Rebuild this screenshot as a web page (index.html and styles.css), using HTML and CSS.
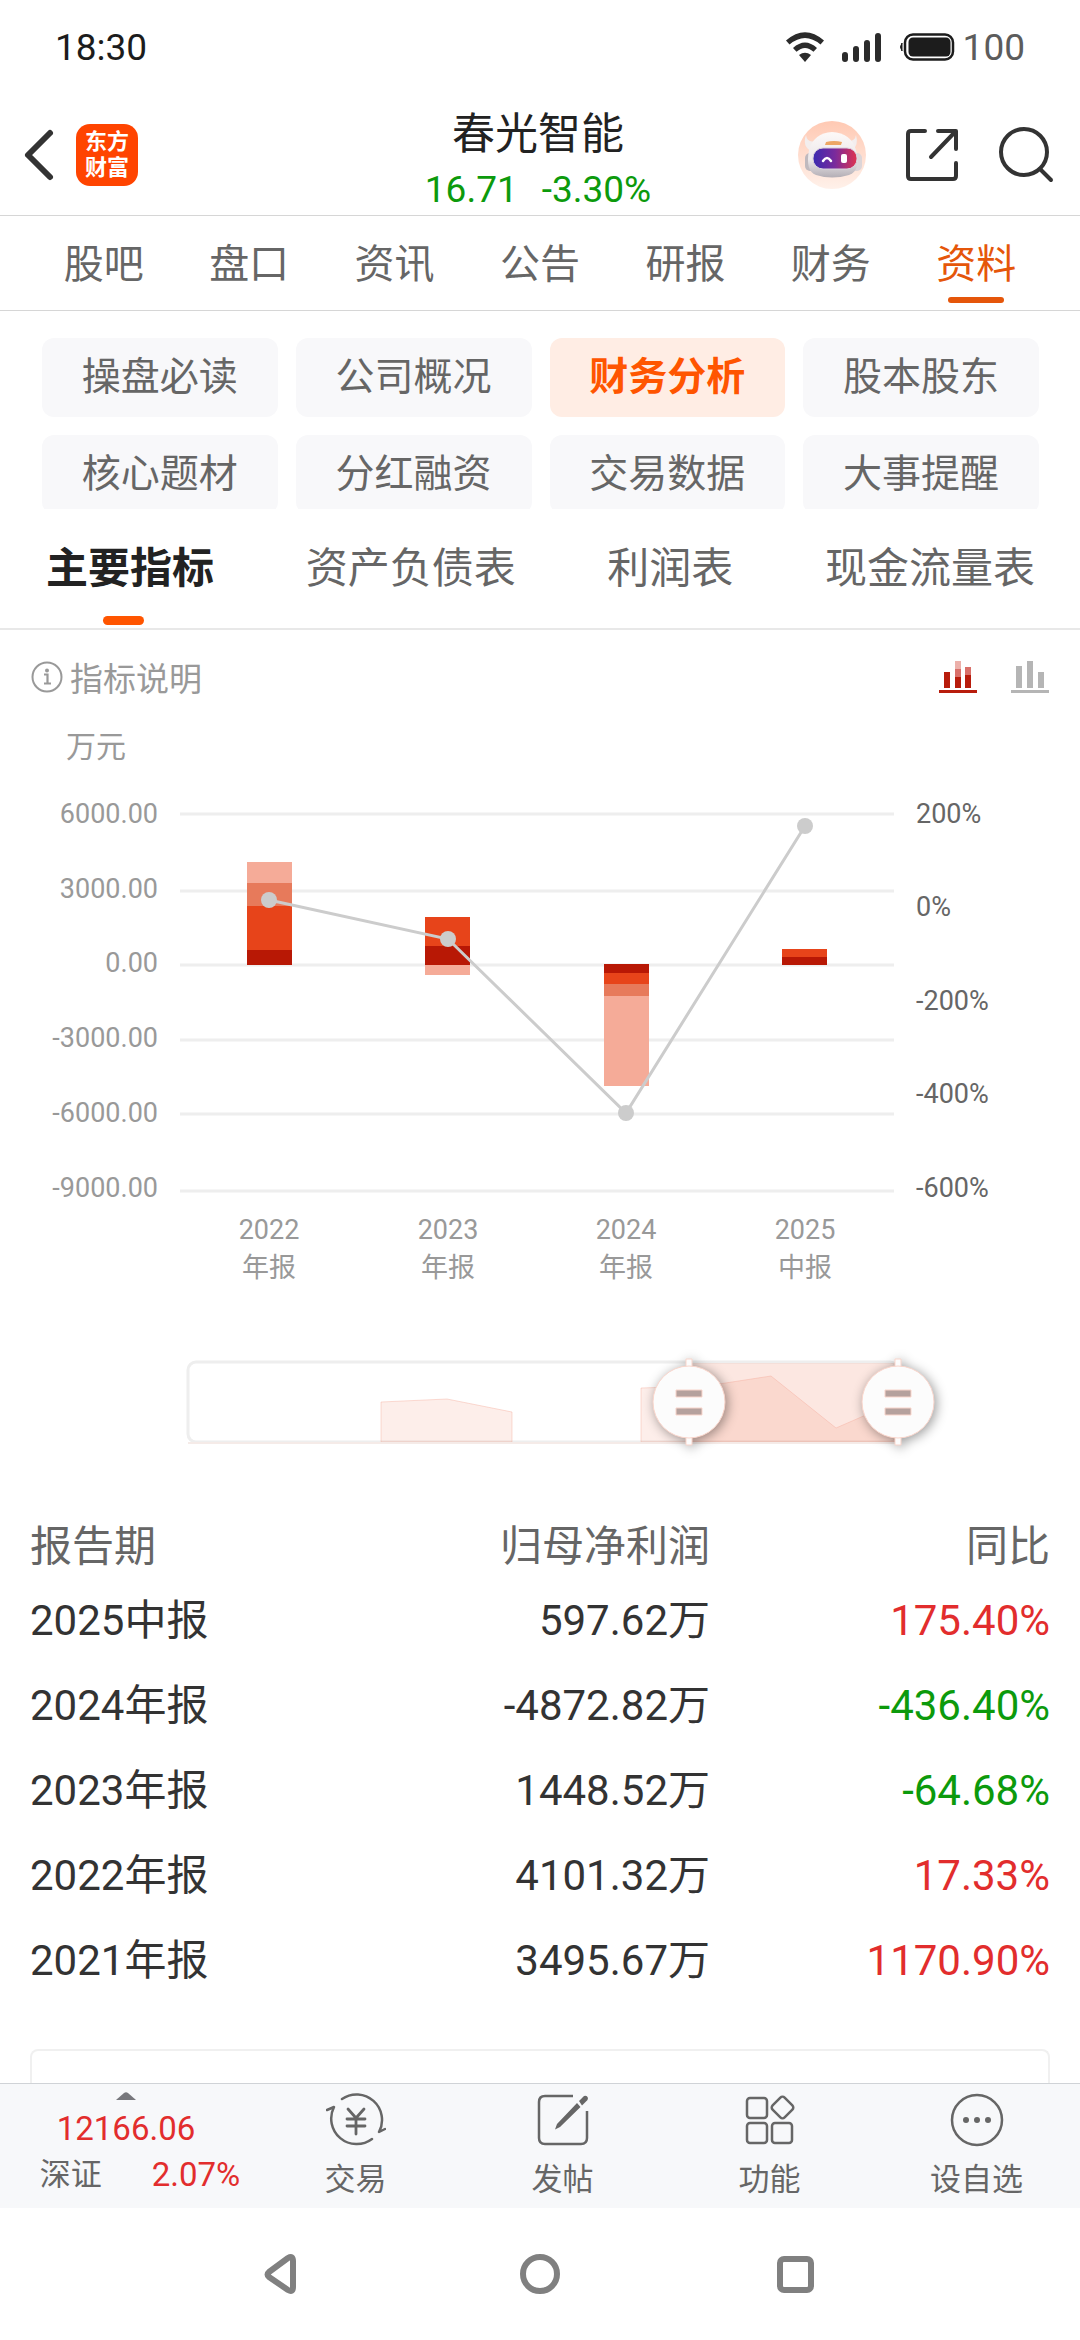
FILE: index.html
```html
<!DOCTYPE html>
<html lang="zh-CN">
<head>
<meta charset="utf-8">
<meta name="viewport" content="width=device-width, initial-scale=1">
<title>春光智能 - 财务分析</title>
<link rel="stylesheet" href="styles.css">
</head>
<body>
<div class="screen">
  <div class="status">
    <span class="status-time">18:30</span>
    <div class="status-icons">
      <svg width="40" height="32" viewBox="0 0 40 32" fill="#2b2b2b" aria-hidden="true">
        <path d="M1 9.500Q20-7 39 9.500L35.500 13.500Q20 .5 4.500 13.500Z"/>
        <path d="M8 17Q20 6 32 17L28.500 20.800Q20 13 11.500 20.800Z"/>
        <path d="M14 24Q20 19.500 26 24L20 31Z"/>
      </svg>
      <svg width="42" height="32" viewBox="0 0 42 32" stroke="#2b2b2b" stroke-width="6" stroke-linecap="round" aria-hidden="true">
        <path d="M4 24v4M15 18v10M26 12v16M37 5v23"/>
      </svg>
      <svg width="56" height="32" viewBox="0 0 56 32" aria-hidden="true">
        <path d="M3 12Q0 16 3 20Z" fill="#1c1c1c" stroke="#1c1c1c"/>
        <rect x="6" y="3.500" width="48" height="25" rx="8" fill="none" stroke="#1c1c1c" stroke-width="2.500"/>
        <rect x="9.500" y="6.500" width="42" height="19" rx="4.500" fill="#1c1c1c"/>
      </svg>
      <span class="status-level">100</span>
    </div>
  </div>

  <header class="header">
    <div class="header-side">
      <button class="icon-btn" aria-label="返回">
        <svg width="34" height="54" viewBox="0 0 34 54" fill="none" stroke="#333" stroke-width="6" stroke-linecap="round" stroke-linejoin="round"><path d="M28 5L6 27l22 22"/></svg>
      </button>
      <a class="logo" href="#">东方<br>财富</a>
    </div>
    <div class="header-title">
      <h1 class="stock-name">春光智能</h1>
      <div class="stock-price"><span>16.71</span><span>-3.30%</span></div>
    </div>
    <div class="header-side header-actions">
      <button class="icon-btn" aria-label="智能助手">
        <svg width="68" height="68" viewBox="0 0 68 68">
          <defs>
            <linearGradient id="halo" x1="0" y1="0" x2="0" y2="1"><stop offset="0" stop-color="#ffc9b3"/><stop offset="1" stop-color="#fff1ea"/></linearGradient>
            <linearGradient id="shell" x1="0" y1="0" x2="0" y2="1"><stop offset="0" stop-color="#fdf9f8"/><stop offset=".6" stop-color="#ece8ea"/><stop offset="1" stop-color="#b3aeb5"/></linearGradient>
            <linearGradient id="visor" x1="0" y1="0" x2="1" y2="0"><stop offset="0" stop-color="#3a2bb0"/><stop offset=".5" stop-color="#7a2a9c"/><stop offset="1" stop-color="#e0334f"/></linearGradient>
          </defs>
          <circle cx="34" cy="34" r="34" fill="url(#halo)"/>
          <path d="M8 14Q9 22 17 20L13 30Q4 25 8 14ZM58 14Q61 25 54 29L49 20Q57 21 58 14Z" fill="#f3eeee"/>
          <rect x="7" y="32" width="12" height="18" rx="5" fill="#bfb9be"/>
          <rect x="53" y="32" width="11" height="18" rx="5" fill="#dcd5d8"/>
          <path d="M34 11Q53 12 58 29Q63 50 51 54Q34 59 18 54Q7 50 11 29Q16 12 34 11Z" fill="url(#shell)"/>
          <path d="M28 21Q36 19 44 21L43 24H27Z" fill="#eda764"/>
          <rect x="15" y="27" width="44" height="21" rx="10" fill="url(#visor)" stroke="#d8d0dc"/>
          <path d="M25 40Q29 34 33 40" fill="none" stroke="#fff" stroke-width="2.500" stroke-linecap="round"/>
          <rect x="43" y="33" width="6" height="9" rx="2" fill="#fff"/>
        </svg>
      </button>
      <button class="icon-btn" aria-label="分享">
        <svg width="56" height="56" viewBox="0 0 56 56" fill="none" stroke="#333" stroke-width="4" stroke-linecap="round" stroke-linejoin="round"><path d="M21 4H7Q4 4 4 7V49Q4 52 7 52H49Q52 52 52 49V36M34 4H52V22M51 5L27 30"/></svg>
      </button>
      <button class="icon-btn" aria-label="搜索">
        <svg width="56" height="56" viewBox="0 0 56 56" fill="none" stroke="#333" stroke-width="4" stroke-linecap="round"><circle cx="26" cy="25" r="23"/><path d="M42 42L53 53"/></svg>
      </button>
    </div>
  </header>

  <nav class="tabs">
    <a class="tab" href="#">股吧</a>
    <a class="tab" href="#">盘口</a>
    <a class="tab" href="#">资讯</a>
    <a class="tab" href="#">公告</a>
    <a class="tab" href="#">研报</a>
    <a class="tab" href="#">财务</a>
    <a class="tab tab-active" href="#">资料</a>
  </nav>

  <main class="content">
    <div class="chips">
      <button class="chip">操盘必读</button>
      <button class="chip">公司概况</button>
      <button class="chip chip-active">财务分析</button>
      <button class="chip">股本股东</button>
      <button class="chip">核心题材</button>
      <button class="chip">分红融资</button>
      <button class="chip">交易数据</button>
      <button class="chip">大事提醒</button>
    </div>

    <nav class="subtabs">
      <a class="subtab subtab-active" href="#">主要指标</a>
      <a class="subtab" href="#">资产负债表</a>
      <a class="subtab" href="#">利润表</a>
      <a class="subtab" href="#">现金流量表</a>
    </nav>

    <div class="toolbar">
      <button class="hint">
        <svg width="32" height="32" viewBox="0 0 32 32" fill="none" stroke="#999" stroke-width="2"><circle cx="16" cy="16" r="14.500"/><path d="M13 13.500H16.500V22M13 22.500H20" stroke-width="2.200"/><circle cx="16" cy="9.500" r="2" fill="#999" stroke="none"/></svg>
        指标说明
      </button>
      <div class="toggles">
        <button class="icon-btn" aria-label="堆叠图">
          <svg width="38" height="34" viewBox="0 0 38 34"><path fill="#b81c0c" d="M5 12h6v16H5zM16 17h6v11h-6zM26 15h6v13h-6zM0 30h38v3H0z"/><path fill="#d9706a" d="M16 9h6v8h-6zM26 7h6v8h-6z"/><path fill="#ecb0aa" d="M16 1h6v8h-6z"/></svg>
        </button>
        <button class="icon-btn" aria-label="柱状图">
          <svg width="38" height="34" viewBox="0 0 38 34"><path fill="#b5b5b5" d="M5 6h6v22H5zM16 1h6v27h-6zM27 12h6v16h-6zM0 30h38v3H0z"/></svg>
        </button>
      </div>
    </div>

    <svg class="chart" viewBox="0 720 1080 760" role="img" aria-label="归母净利润与同比">
      <text class="unit" x="66" y="757">万元</text>
      <path class="grid" d="M180 814H894M180 891H894M180 965H894M180 1040H894M180 1114H894M180 1191H894"/>
      <g class="axis axis-left">
        <text x="158" y="823">6000.00</text>
        <text x="158" y="898">3000.00</text>
        <text x="158" y="972">0.00</text>
        <text x="158" y="1047">-3000.00</text>
        <text x="158" y="1122">-6000.00</text>
        <text x="158" y="1197">-9000.00</text>
      </g>
      <g class="axis axis-right">
        <text x="916" y="823">200%</text>
        <text x="916" y="916">0%</text>
        <text x="916" y="1010">-200%</text>
        <text x="916" y="1103">-400%</text>
        <text x="916" y="1197">-600%</text>
      </g>
      <g class="axis axis-bottom">
        <text x="269" y="1239">2022</text><text x="269" y="1277">年报</text>
        <text x="448" y="1239">2023</text><text x="448" y="1277">年报</text>
        <text x="626" y="1239">2024</text><text x="626" y="1277">年报</text>
        <text x="805" y="1239">2025</text><text x="805" y="1277">中报</text>
      </g>
      <path class="q1" d="M247 950h45v15h-45zM425 946h45v19h-45zM604 964h45v9h-45zM782 957h45v8h-45z"/>
      <path class="q2" d="M247 906h45v44h-45zM425 917h45v29h-45zM604 973h45v11h-45zM782 949h45v8h-45z"/>
      <path class="q3" d="M247 883h45v23h-45zM604 984h45v12h-45z"/>
      <path class="q4" d="M247 862h45v21h-45zM425 965h45v10h-45zM604 996h45v90h-45z"/>
      <path class="trend" d="M269 900L448 939L626 1113L805 826"/>
      <g class="dots"><circle cx="269" cy="900" r="8"/><circle cx="448" cy="939" r="8"/><circle cx="626" cy="1113" r="8"/><circle cx="805" cy="826" r="8"/></g>

      <rect class="range-box" x="188" y="1362" width="710" height="80" rx="8"/>
      <rect class="range-selected" x="689" y="1363" width="209" height="79"/>
      <path class="range-area" d="M381 1442V1402L447 1399L512 1412V1442ZM641 1442V1388L706 1386L771 1376L836 1428L898 1401V1442Z"/>
      <path class="range-base" d="M188 1443H898"/>
      <g class="handle"><path class="handle-stem" d="M686 1359h6v86h-6z"/><circle cx="689" cy="1402" r="36"/><path class="handle-grip" d="M676 1390h26v7h-26zM676 1408h26v7h-26z"/></g>
      <g class="handle"><path class="handle-stem" d="M895 1359h6v86h-6z"/><circle cx="898" cy="1402" r="36"/><path class="handle-grip" d="M885 1390h26v7h-26zM885 1408h26v7h-26z"/></g>
    </svg>

    <table class="report">
      <thead><tr><th>报告期</th><th>归母净利润</th><th>同比</th></tr></thead>
      <tbody>
        <tr><td>2025中报</td><td>597.62万</td><td class="up">175.40%</td></tr>
        <tr><td>2024年报</td><td>-4872.82万</td><td class="down">-436.40%</td></tr>
        <tr><td>2023年报</td><td>1448.52万</td><td class="down">-64.68%</td></tr>
        <tr><td>2022年报</td><td>4101.32万</td><td class="up">17.33%</td></tr>
        <tr><td>2021年报</td><td>3495.67万</td><td class="up">1170.90%</td></tr>
      </tbody>
    </table>
    <div class="next-card"></div>
  </main>

  <footer class="dock">
    <button class="index">
      <svg width="20" height="8" viewBox="0 0 20 8"><path d="M0 8L8 1Q10-.5 12 1L20 8Z" fill="#77777c"/></svg>
      <span class="index-value">12166.06</span>
      <span class="index-row"><span>深证</span><span class="index-change">2.07%</span></span>
    </button>
    <button class="dock-item">
      <svg width="60" height="56" viewBox="0 0 60 56" fill="none" stroke="#666" stroke-width="2.500" stroke-linecap="round" stroke-linejoin="round"><path d="M16 7A25.500 25.500 0 0 1 53 40L59 37M46 47A25.500 25.500 0 0 1 8 15L1 18"/><path d="M22 17L30 26L38 17M30 26V42M21 27H39M21 34H39" stroke-width="2.800"/></svg>
      交易
    </button>
    <button class="dock-item">
      <svg width="56" height="56" viewBox="0 0 56 56" fill="none" stroke="#666" stroke-width="2.500"><path d="M38 4H10Q4 4 4 10V46Q4 52 10 52H46Q52 52 52 46V19"/><path fill="#666" stroke="none" d="M42 11L45.500 15L25 35L20 37.500L22 32ZM44 9L49 4Q52 3 53 6Q53 8 51 9.500L47 13.500Z"/></svg>
      发帖
    </button>
    <button class="dock-item">
      <svg width="56" height="56" viewBox="0 0 56 56" fill="none" stroke="#666" stroke-width="2.500"><rect x="5" y="6" width="20" height="20" rx="3"/><rect x="5" y="31" width="20" height="20" rx="3"/><rect x="30" y="31" width="20" height="20" rx="3"/><rect x="32" y="7" width="17" height="17" rx="3" transform="rotate(45 40.500 15.500)"/></svg>
      功能
    </button>
    <button class="dock-item">
      <svg width="56" height="56" viewBox="0 0 56 56"><circle cx="28" cy="28" r="25" fill="none" stroke="#666" stroke-width="2.500"/><g fill="#666"><circle cx="17" cy="28" r="3"/><circle cx="28" cy="28" r="3"/><circle cx="39" cy="28" r="3"/></g></svg>
      设自选
    </button>
  </footer>

  <div class="sysnav">
    <button class="icon-btn" aria-label="返回"><svg width="48" height="48" viewBox="2 0 48 48" fill="none" stroke="#808080" stroke-width="6" stroke-linejoin="round"><path d="M10 22L29 8Q34 5 34 11V37Q34 43 29 40L10 27Q7 24.500 10 22Z"/></svg></button>
    <button class="icon-btn" aria-label="主屏幕"><svg width="48" height="48" viewBox="0 0 48 48" fill="none" stroke="#808080" stroke-width="6"><circle cx="24" cy="24" r="17"/></svg></button>
    <button class="icon-btn" aria-label="最近任务"><svg width="48" height="48" viewBox="0 0 48 48" fill="none" stroke="#808080" stroke-width="6"><rect x="9" y="9" width="31" height="31" rx="4"/></svg></button>
  </div>
</div>
</body>
</html>
```

FILE: styles.css
```css
* {
  box-sizing: border-box;
}

body {
  margin: 0;
  background: #fff;
  color: #333;
  font-family: Roboto, "Noto Sans CJK SC", sans-serif;
}

button {
  margin: 0;
  padding: 0;
  border: 0;
  background: none;
  color: inherit;
  font: inherit;
}

a {
  color: inherit;
  text-decoration: none;
}

svg {
  display: block;
  flex: none;
}

.screen {
  display: flex;
  flex-direction: column;
  min-height: 100vh;
}

.icon-btn {
  display: flex;
}

/* status bar */
.status {
  display: flex;
  justify-content: space-between;
  align-items: center;
  height: 94px;
  padding: 0 55px;
  font-size: 37px;
}

.status-time {
  color: #1c1c1c;
}

.status-icons {
  display: flex;
  align-items: center;
  gap: 16px;
}

.status-level {
  margin-left: -8px;
  color: #5c5c5c;
}

/* header */
.header {
  display: grid;
  grid-template-columns: 1fr auto 1fr;
  align-items: center;
  height: 122px;
  padding: 0 26px 0 22px;
  border-bottom: 1px solid #d6d6d6;
}

.header-side {
  display: flex;
  align-items: center;
  gap: 20px;
}

.header-actions {
  justify-content: flex-end;
  gap: 38px;
}

.logo {
  display: flex;
  align-items: center;
  justify-content: center;
  width: 62px;
  height: 62px;
  border-radius: 14px;
  background: #ff4400;
  color: #fff;
  font-size: 22px;
  font-weight: 700;
  line-height: 26px;
}

.header-title {
  display: flex;
  flex-direction: column;
  align-items: center;
  padding-top: 4px;
}

.stock-name {
  margin: 0;
  color: #222;
  font-size: 43px;
  font-weight: 400;
  line-height: 66px;
}

.stock-price {
  display: flex;
  gap: 24px;
  color: #0c9a0c;
  font-size: 37px;
  line-height: 46px;
}

/* main tabs */
.tabs {
  display: flex;
  height: 95px;
  padding: 0 31px;
  border-bottom: 1px solid #d6d6d6;
  color: #666;
  font-size: 40px;
  line-height: 97px;
}

.tab {
  position: relative;
  flex: 1;
  text-align: center;
}

.tab-active {
  color: #e5560a;
}

.tab-active::after {
  content: "";
  position: absolute;
  bottom: 7px;
  left: 50%;
  width: 56px;
  height: 6px;
  margin-left: -28px;
  border-radius: 3px;
  background: #e5560a;
}

.content {
  flex: 1;
}

.chips {
  display: grid;
  grid-template-columns: repeat(4, 1fr);
  grid-auto-rows: 79px;
  gap: 18px;
  height: 198px;
  padding: 27px 41px 0 42px;
  overflow: hidden;
}

.chip {
  padding-bottom: 9px;
  border-radius: 12px;
  background: #f8f8fa;
  color: #666;
  font-size: 39px;
}

.chip-active {
  background: #ffede4;
  color: #ff5500;
  font-weight: 700;
}

/* report tabs */
.subtabs {
  display: flex;
  justify-content: space-between;
  height: 121px;
  padding: 0 45px 0 46px;
  border-bottom: 2px solid #e8e8e8;
  color: #666;
  font-size: 42px;
  line-height: 120px;
}

.subtab {
  position: relative;
}

.subtab-active {
  color: #222;
  font-weight: 700;
}

.subtab-active::after {
  content: "";
  position: absolute;
  bottom: 3px;
  left: 57px;
  width: 41px;
  height: 9px;
  border-radius: 5px;
  background: #ff5500;
}

.toolbar {
  display: flex;
  align-items: center;
  justify-content: space-between;
  height: 90px;
  padding: 4px 31px 0;
}

.hint {
  display: flex;
  align-items: center;
  gap: 7px;
  color: #999;
  font-size: 33px;
}

.toggles {
  display: flex;
  gap: 34px;
}

/* chart */
.chart {
  width: 100%;
  height: auto;
}

.unit {
  fill: #999;
  font-size: 30px;
}

.grid {
  fill: none;
  stroke: #eee;
  stroke-width: 3;
}

.axis {
  fill: #999;
  font-size: 27px;
}

.axis-left {
  text-anchor: end;
}

.axis-right {
  fill: #666;
}

.axis-bottom {
  text-anchor: middle;
}

.q1 {
  fill: #b81805;
}

.q2 {
  fill: #e7441a;
}

.q3 {
  fill: #e77a5b;
}

.q4 {
  fill: #f5ab98;
}

.trend {
  fill: none;
  stroke: #ccc;
  stroke-width: 3;
}

.dots {
  fill: #ccc;
}

.range-box {
  fill: none;
  stroke: #eee;
  stroke-width: 3;
}

.range-selected {
  fill: #e7441a;
  fill-opacity: 0.13;
}

.range-area {
  fill: #e7441a;
  fill-opacity: 0.09;
  stroke: #f5ab98;
  stroke-opacity: 0.4;
}

.range-base {
  stroke: #f5ebe8;
  stroke-width: 2;
}

.handle {
  fill: #fcfcfc;
  stroke: #f9d5cb;
  filter: drop-shadow(2px 2px 6px rgba(0, 0, 0, 0.4));
}

.handle-grip {
  fill: #b5a19d;
}

/* report table */
.report {
  width: 100%;
  padding: 0 30px;
  border-spacing: 0;
  table-layout: fixed;
  font-size: 42px;
}

.report th,
.report td {
  padding: 0;
  font-weight: 400;
  line-height: 85px;
  text-align: right;
  vertical-align: baseline;
}

.report th {
  padding-top: 36px;
  color: #666;
  line-height: 62px;
}

.report th:first-child,
.report td:first-child {
  text-align: left;
}

.report .up {
  color: #e22d2d;
}

.report .down {
  color: #0c9a0c;
}

.next-card {
  height: 34px;
  margin: 46px 30px 0;
  border: 2px solid #f0f0f0;
  border-bottom: 0;
  border-radius: 8px 8px 0 0;
}

/* bottom dock */
.dock {
  display: grid;
  grid-template-columns: 252fr 207fr 207fr 207fr 207fr;
  height: 125px;
  border-top: 1px solid #d0d3d7;
  background: #f7f8fa;
  color: #666;
  font-size: 31px;
}

.index {
  display: flex;
  flex-direction: column;
  align-items: center;
  padding-top: 8px;
}

.index-value {
  margin-top: 7px;
  color: #e22d2d;
  font-size: 33px;
  line-height: 44px;
}

.index-row {
  display: flex;
  align-items: center;
  gap: 50px;
  padding-left: 28px;
  line-height: 48px;
}

.index-change {
  color: #e22d2d;
  font-size: 33px;
}

.dock-item {
  display: flex;
  flex-direction: column;
  align-items: center;
  padding-top: 8px;
  line-height: 64px;
}

/* system navigation */
.sysnav {
  display: flex;
  align-items: center;
  justify-content: center;
  gap: 207px;
  height: 132px;
}
```
